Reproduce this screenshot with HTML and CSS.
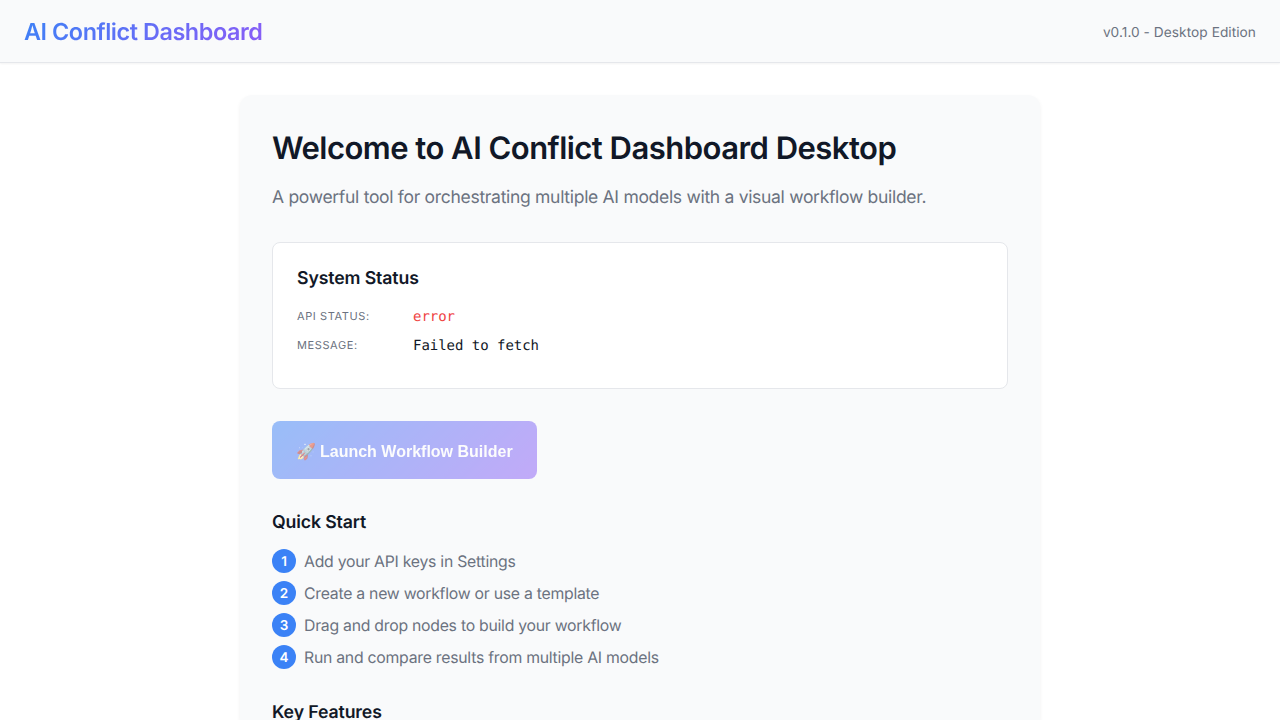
FILE: index.html
```html
<!DOCTYPE html>
<html lang="en">
<head>
<meta charset="utf-8">
<title>AI Conflict Dashboard</title>
<link rel="stylesheet" href="styles.css">
</head>
<body>
<header class="header">
  <div class="brand">AI Conflict Dashboard</div>
  <div class="version">v0.1.0 - Desktop Edition</div>
</header>
<main class="main">
  <section class="card">
    <h1 class="title">Welcome to AI Conflict Dashboard Desktop</h1>
    <p class="subtitle">A powerful tool for orchestrating multiple AI models with a visual workflow builder.</p>
    <div class="status">
      <h2 class="heading">System Status</h2>
      <div class="row"><span class="label">API Status:</span><span class="value error">error</span></div>
      <div class="row"><span class="label">Message:</span><span class="value">Failed to fetch</span></div>
    </div>
    <button class="launch" disabled><span class="rocket">🚀</span><span class="launch-text">Launch Workflow Builder</span></button>
    <h2 class="heading quick">Quick Start</h2>
    <ol class="steps">
      <li class="step"><span class="num">1</span><span>Add your API keys in Settings</span></li>
      <li class="step"><span class="num">2</span><span>Create a new workflow or use a template</span></li>
      <li class="step"><span class="num">3</span><span>Drag and drop nodes to build your workflow</span></li>
      <li class="step"><span class="num">4</span><span>Run and compare results from multiple AI models</span></li>
    </ol>
    <h2 class="heading features">Key Features</h2>
  </section>
</main>
</body>
</html>
```
FILE: styles.css
```css
* { box-sizing: border-box; margin: 0; padding: 0; }
html, body { height: 720px; overflow: hidden; }
body { display: flex; flex-direction: column; background: #fff; color: #111827; font-family: Inter, "Liberation Sans", sans-serif; text-rendering: geometricPrecision; }
.header { flex: none; display: flex; align-items: center; justify-content: space-between; height: 63px; padding: 0 24px; background: #f9fafb; border-bottom: 1px solid #e5e7eb; box-shadow: 0 1px 2px rgba(0,0,0,.05); }
.brand { padding-top: 2px; font-size: 23.4px; line-height: 36px; font-weight: 600; letter-spacing: -0.44px; background: linear-gradient(135deg, #3b82f6, #8b5cf6); -webkit-background-clip: text; background-clip: text; color: transparent; }
.version { font-size: 13.7px; letter-spacing: 0.05px; color: #6b7280; padding-top: 3px; }
.main { flex: 1; min-height: 0; padding: 32px 240px 0; }
.card { display: flex; flex-direction: column; align-items: flex-start; height: 100%; padding: 32px 32px 0; background: #f9fafb; border-radius: 12px 12px 0 0; box-shadow: 0 2px 4px rgba(0,0,0,.06); }
.title { padding-top: 1px; font-size: 31px; line-height: 42px; font-weight: 600; letter-spacing: -0.52px; white-space: nowrap; }
.subtitle { margin-top: 14px; font-size: 17.5px; line-height: 28px; letter-spacing: -0.3px; color: #6b7280; white-space: nowrap; }
.status { flex: none; align-self: stretch; height: 147px; margin-top: 30px; padding: 21px 24px; background: #fff; border: 1px solid #e5e7eb; border-radius: 8px; }
.heading { font-size: 17.7px; line-height: 30px; font-weight: 600; letter-spacing: -0.12px; }
.row { display: flex; align-items: center; height: 21px; margin-top: 8px; }
.heading + .row { margin-top: 11px; }
.label { width: 116px; font-size: 11px; letter-spacing: 0.6px; text-transform: uppercase; color: #6b7280; }
.value { padding-top: 2px; font-family: "DejaVu Sans Mono", monospace; font-size: 14px; letter-spacing: -0.03px; }
.error { color: #ef4444; }
.launch { flex: none; display: flex; align-items: center; gap: 4px; width: 265px; height: 58px; margin-top: 32px; padding: 3px 24px 0; border: 0; border-radius: 8px; background: linear-gradient(135deg, #3b82f6, #8b5cf6); opacity: .5; color: #fff; font: 700 16px "Liberation Sans", sans-serif; white-space: nowrap; }
.rocket { width: 20px; }
.quick { margin-top: 29px; }
.steps { flex: none; display: flex; flex-direction: column; gap: 8px; margin-top: 11px; list-style: none; }
.step { display: flex; align-items: center; gap: 8px; height: 24px; font-size: 15.8px; letter-spacing: -0.26px; color: #6b7280; }
.num { display: flex; align-items: center; justify-content: center; width: 24px; height: 24px; padding-top: 1px; border-radius: 50%; background: #3b82f6; color: #fff; font-size: 13.5px; font-weight: 600; letter-spacing: 0; }
.features { flex: none; height: 22px; margin-top: 29px; }
```
